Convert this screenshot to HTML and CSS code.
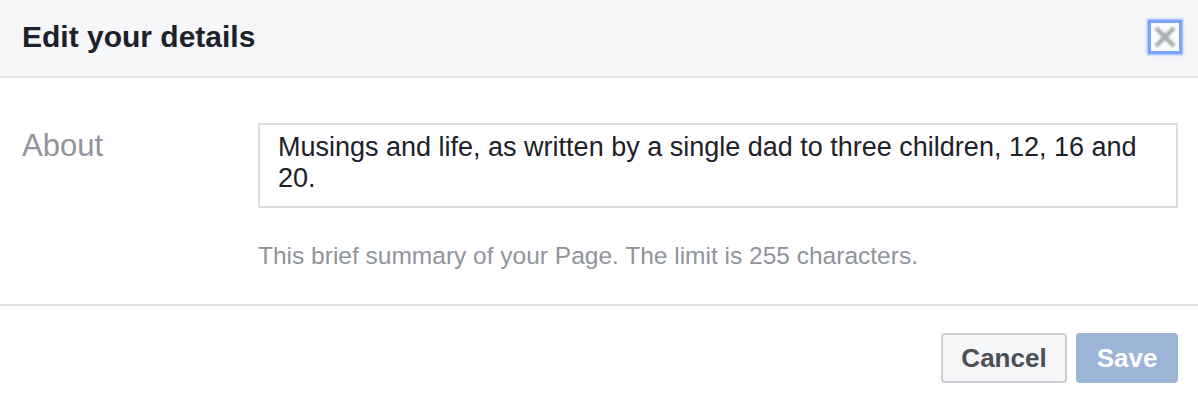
FILE: index.html
```html
<!DOCTYPE html>
<html>
<head>
<meta charset="utf-8">
<link rel="stylesheet" href="styles.css">
</head>
<body>
<div class="dialog">
  <div class="header">
    <h1 class="title">Edit your details</h1>
    <div class="close" aria-label="Close">
      <svg width="28" height="28" viewBox="0 0 28 28"><path d="M5 5 L23 23 M23 5 L5 23" stroke="#a7abb2" stroke-width="4.5" stroke-linecap="butt" fill="none"/></svg>
    </div>
  </div>
  <div class="content">
    <div class="label">About</div>
    <div class="field">
      <div class="input">Musings and life, as written by a single dad to three children, 12, 16 and 20.</div>
      <div class="help">This brief summary of your Page. The limit is 255 characters.</div>
    </div>
  </div>
  <div class="footer">
    <button class="btn cancel">Cancel</button>
    <button class="btn save">Save</button>
  </div>
</div>
</body>
</html>
```
FILE: styles.css
```css
html, body {
  margin: 0;
  padding: 0;
  background: #ffffff;
}
body {
  font-family: "Liberation Sans", Arial, sans-serif;
  width: 1198px;
  height: 408px;
  overflow: hidden;
}
.header {
  height: 76px;
  background: #f6f7f9;
  border-bottom: 2px solid #e5e5e5;
  display: flex;
  align-items: center;
  justify-content: space-between;
  padding: 0 19px 0 22px;
}
.title {
  margin: 0;
  font-size: 30px;
  font-weight: bold;
  color: #1d2129;
  line-height: 36px;
  margin-top: -3px;
}
.close {
  width: 28px;
  height: 28px;
  margin-top: -2px;
  background: #fbfcfd;
  box-shadow: 0 0 0 3px #7aa2ff, 0 0 2px 4px rgba(110, 150, 255, 0.7);
}
.close svg {
  display: block;
  filter: blur(0.8px);
}
.content {
  display: grid;
  grid-template-columns: 236px 1fr;
  padding: 45px 20px 33px 22px;
}
.label {
  font-size: 31px;
  line-height: 36px;
  color: #90949c;
  margin-top: 5px;
}
.input {
  border: 2px solid #dadde1;
  padding: 7px 18px 12px 18px;
  font-size: 27px;
  line-height: 31px;
  color: #1d2129;
}
.help {
  margin-top: 33px;
  font-size: 24.5px;
  line-height: 30px;
  color: #90949c;
}
.footer {
  border-top: 2px solid #dddfe2;
  display: flex;
  justify-content: flex-end;
  gap: 9px;
  padding: 27px 20px 0 0;
}
.btn {
  height: 50px;
  border-radius: 4px;
  font-family: "Liberation Sans", Arial, sans-serif;
  font-size: 26px;
  font-weight: bold;
  padding: 0;
  margin: 0;
}
.cancel {
  width: 126px;
  background: #f5f6f7;
  border: 2px solid #ccd0d5;
  color: #4b4f56;
}
.save {
  width: 102px;
  background: #9cb4d8;
  border: 2px solid #9cb4d8;
  color: #ffffff;
}
```
